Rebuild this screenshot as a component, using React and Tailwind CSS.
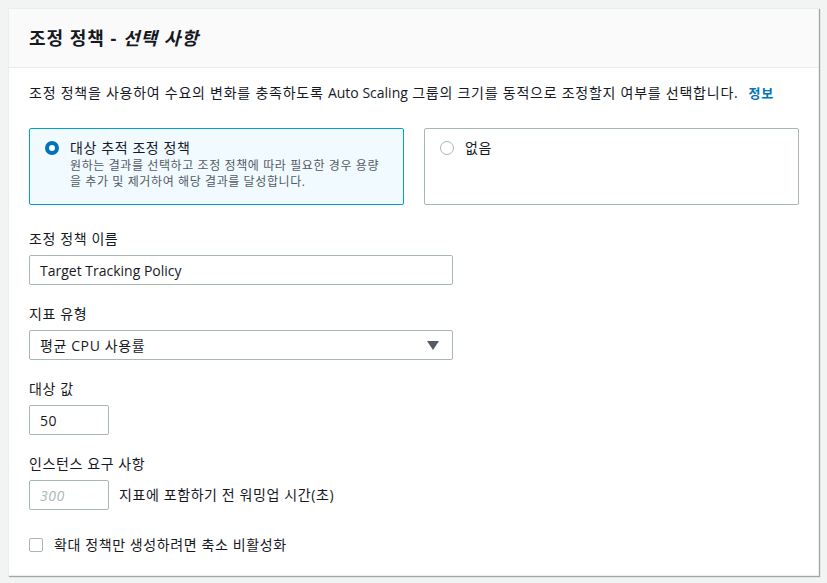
import React from "react";

const font = { fontFamily: '"Open Sans", "Noto Sans CJK KR", sans-serif' };

export default function App() {
  return (
    <div className="min-h-[583px] w-[827px] bg-[#f2f3f3] pt-[8px] pl-[8px] tracking-[0.6px]" style={font}>
      <div className="w-[811px] h-[568px] bg-white border border-[#eaeded] shadow-[1px_1px_1px_0_rgba(0,28,36,0.35)] text-[#16191f]">
        <div className="h-[59px] bg-[#fafafa] border-b border-[#eaeded] px-5 flex items-center">
          <h2 className="text-[18px] font-bold leading-[22px] tracking-[1px]">
            조정 정책 - <i>선택 사항</i>
          </h2>
        </div>
        <div className="px-5 pt-[15px]">
          <p className="text-[14px] leading-[20px] tracking-[0.75px]">
            조정 정책을 사용하여 수요의 변화를 충족하도록 <span className="tracking-normal">Auto Scaling</span> 그룹의 크기를 동적으로 조정할지 여부를 선택합니다.
            <span className="ml-[10px] text-[13px] font-bold text-[#0073bb]">정보</span>
          </p>

          <div className="mt-[25px] grid grid-cols-2 gap-5 w-[770px]">
            <div className="h-[77px] border border-[#00a1c9] bg-[#f1faff] rounded-[2px] pt-[9px] pl-[15px] pr-4 flex">
              <div className="mt-[3px] w-[14px] h-[14px] rounded-full border-[4px] border-[#0073bb] bg-white shrink-0" />
              <div className="ml-[11px]">
                <div className="text-[14px] leading-[20px]">대상 추적 조정 정책</div>
                <div className="text-[12px] leading-[16px] text-[#545b64]">
                  원하는 결과를 선택하고 조정 정책에 따라 필요한 경우 용량을 추가 및 제거하여 해당 결과를 달성합니다.
                </div>
              </div>
            </div>
            <div className="h-[77px] border border-[#aab7b8] bg-white rounded-[2px] pt-[9px] pl-[15px] flex">
              <div className="mt-[3px] w-[14px] h-[14px] rounded-full border border-[#aab7b8] bg-white shrink-0" />
              <div className="ml-[11px] text-[14px] leading-[20px]">없음</div>
            </div>
          </div>

          <div className="mt-[24px]">
            <div className="text-[14px] leading-[20px]">조정 정책 이름</div>
            <div className="mt-[6px] w-[424px] h-[30px] border border-[#aab7b8] rounded-[2px] px-[10px] flex items-center text-[14px] tracking-normal">
              Target Tracking Policy
            </div>
          </div>

          <div className="mt-[19px]">
            <div className="text-[14px] leading-[20px]">지표 유형</div>
            <div className="mt-[6px] w-[424px] h-[30px] border border-[#aab7b8] rounded-[2px] pl-[10px] pr-[13px] flex items-center justify-between text-[14px]">
              <span>평균 CPU 사용률</span>
              <svg width="12" height="9" viewBox="0 0 12 9">
                <polygon points="0,0 12,0 6,9" fill="#545b64" />
              </svg>
            </div>
          </div>

          <div className="mt-[19px]">
            <div className="text-[14px] leading-[20px]">대상 값</div>
            <div className="mt-[6px] w-[80px] h-[30px] border border-[#aab7b8] rounded-[2px] px-[10px] flex items-center text-[14px]">
              50
            </div>
          </div>

          <div className="mt-[19px]">
            <div className="text-[14px] leading-[20px]">인스턴스 요구 사항</div>
            <div className="mt-[6px] flex items-center">
              <div className="w-[80px] h-[30px] border border-[#aab7b8] rounded-[2px] px-[10px] flex items-center text-[14px] italic text-[#aab7b8]">
                300
              </div>
              <span className="ml-[10px] text-[14px] leading-[20px]">지표에 포함하기 전 워밍업 시간(초)</span>
            </div>
          </div>

          <div className="mt-[25px] flex items-center">
            <div className="w-[14px] h-[14px] border border-[#aab7b8] rounded-[2px] bg-white" />
            <span className="ml-[11px] text-[14px] leading-[20px]">확대 정책만 생성하려면 축소 비활성화</span>
          </div>
        </div>
      </div>
    </div>
  );
}
